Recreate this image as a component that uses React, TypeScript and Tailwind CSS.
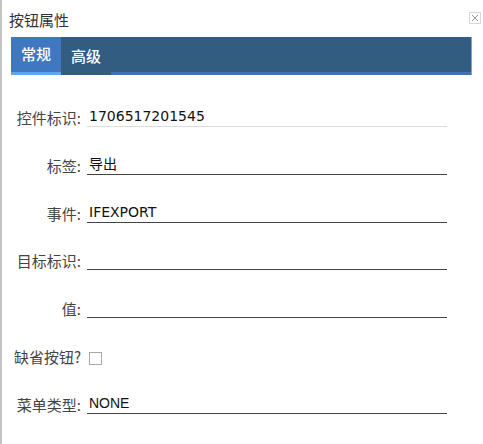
const cjk = "font-['Noto_Sans_CJK_SC','Noto_Sans',sans-serif]";

type Row = { label: string; value?: string; h: string; light?: boolean; check?: boolean; arial?: boolean };

const rows: Row[] = [
  { label: "控件标识:", value: "1706517201545", h: "h-[48px]", light: true },
  { label: "标签:", value: "导出", h: "h-[48px]" },
  { label: "事件:", value: "IFEXPORT", h: "h-[48px]" },
  { label: "目标标识:", value: "", h: "h-[47px]" },
  { label: "值:", value: "", h: "h-[48px]" },
  { label: "缺省按钮?", h: "h-[48px]", check: true },
  { label: "菜单类型:", value: "NONE", h: "h-[48px]", arial: true },
];

export default function App() {
  return (
    <div className={`w-[483px] h-[444px] bg-white border-l-2 border-[#c4c4c4] overflow-hidden ${cjk}`}>
      {/* title */}
      <div className="flex items-center justify-between h-[37px] pl-[7px] pr-[2px]">
        <span className="text-[15px] text-[#333] leading-none mt-[1px]">按钮属性</span>
        <button className="w-[12px] h-[12px] border border-[#d6d6d6] flex items-center justify-center mb-[1px]">
          <svg width="8" height="8" viewBox="0 0 8 8">
            <path d="M1 1L7 7M7 1L1 7" stroke="#9a9a9a" strokeWidth="1" />
          </svg>
        </button>
      </div>

      {/* tabs */}
      <div className="ml-[9px] w-[461px] h-[38px] bg-[#325d81] flex border-r border-[#7aa6d6]">
        <div className="w-[50px] h-full bg-[#3f78c1] border-b-[3px] border-[#5ea6ef] flex items-center justify-center text-white text-[15px] font-medium">
          常规
        </div>
        <div className="w-[50px] h-full flex items-center justify-center text-white text-[15px] font-medium">
          高级
        </div>
        <div className="flex-1 h-full border-b-[3px] border-[#3e73b7]" />
      </div>

      {/* form */}
      <div className="pt-[4px]">
        {rows.map((r) => (
          <div key={r.label} className={`flex items-end ${r.h}`}>
            <div className="w-[79px] text-right text-[15px] text-[#444] leading-none pb-[2px] whitespace-nowrap">{r.label}</div>
            {r.check ? (
              <div className="ml-[8px] mb-[1px] w-[13px] h-[13px] border border-[#a8a8a8] bg-white" />
            ) : (
              <div
                className={`ml-[6px] w-[360px] h-[22px] border-b ${r.light ? "border-[#dcdcdc]" : "border-[#444]"} pl-[2px] flex items-end pb-[3px] text-[14px] leading-none text-[#111] ${
                  r.arial ? "font-['Liberation_Sans',sans-serif]" : "font-['DejaVu_Sans','Noto_Sans_CJK_SC',sans-serif]"
                }`}
              >
                {r.value}
              </div>
            )}
          </div>
        ))}
      </div>
    </div>
  );
}
